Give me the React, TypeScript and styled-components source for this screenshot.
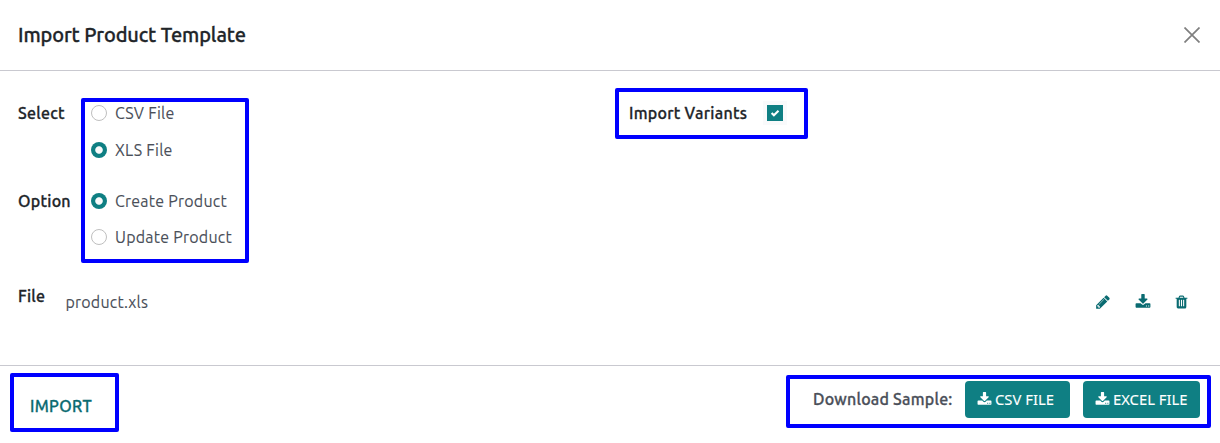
import React from "react";
import styled, { createGlobalStyle } from "styled-components";

const TEAL = "#0f7f83";

const GlobalStyle = createGlobalStyle`
  * { box-sizing: border-box; }
  body { margin: 0; background: #fff; }
`;

const Dialog = styled.div`
  width: 1220px;
  height: 443px;
  display: flex;
  flex-direction: column;
  overflow: hidden;
  background: #fff;
  color: #4a4f59;
  font-family: Ubuntu, "Noto Sans", sans-serif;
  font-size: 16px;
  line-height: 24px;
`;

const Header = styled.header`
  height: 71px;
  flex: none;
  display: flex;
  align-items: center;
  justify-content: space-between;
  padding: 0 20px 0 18px;
  border-bottom: 1px solid #c9c9d0;
`;

const Text = styled.span<{ $track?: number; $size?: number; $strong?: boolean }>`
  display: block;
  white-space: nowrap;
  font-size: ${(p) => p.$size ?? 16}px;
  letter-spacing: ${(p) => p.$track ?? 0}px;
  font-weight: ${(p) => (p.$strong ? 500 : 400)};
  -webkit-text-stroke: ${(p) => (p.$strong ? 0.3 : 0.1)}px currentColor;
`;

const Title = styled.h1`
  margin: 0;
  color: #212529;
`;

const CloseButton = styled.button`
  display: flex;
  padding: 0;
  border: 0;
  background: none;
`;

const Body = styled.main`
  height: 294px;
  flex: none;
  padding: 17px 0 0 18px;
`;

const Fields = styled.div`
  display: flex;
  height: 175px;
`;

const Labels = styled.div`
  width: 63px;
  padding-top: 13px;
  display: flex;
  flex-direction: column;
  gap: 64px;
  color: #212529;
`;

const Frame = styled.div<{ $w: number; $h: number }>`
  width: ${(p) => p.$w}px;
  height: ${(p) => p.$h}px;
  flex: none;
  border: 4px solid #0000ff;
  border-radius: 2px;
`;

const RadioFrame = styled(Frame)`
  margin-top: 10px;
  padding: 0 6px;
`;

const RadioGroup = styled.div`
  margin-top: -1px;
  & + & { margin-top: 27px; }
`;

const RadioRow = styled.div`
  height: 24px;
  display: flex;
  align-items: center;
  gap: 8px;
  & + & { margin-top: 12.5px; }
`;

const Radio = styled.span<{ $on?: boolean }>`
  width: 16px;
  height: 16px;
  flex: none;
  border-radius: 50%;
  background: ${(p) => (p.$on ? `radial-gradient(circle, #f9fafb 3.3px, ${TEAL} 4.2px)` : "#fff")};
  border: ${(p) => (p.$on ? "0" : "1px solid #bfbfbf")};
`;

const VariantsFrame = styled(Frame)`
  margin-left: 366px;
  padding: 0 0 2px 10px;
  display: flex;
  align-items: center;
  color: #212529;
`;

const VariantsLabel = styled.div`
  width: 134px;
`;

const CheckHalo = styled.span`
  width: 24px;
  height: 24px;
  padding: 4px;
  background: #f9fafb;
`;

const Checkbox = styled.span`
  display: block;
  width: 16px;
  height: 16px;
  background: ${TEAL};
  svg { display: block; }
`;

const FileRow = styled.div`
  display: flex;
  margin-top: 21px;
  padding-right: 31px;
`;

const FileLabel = styled.div`
  width: 47.5px;
  color: #212529;
`;

const FileName = styled.div`
  padding-top: 6px;
`;

const FileActions = styled.div`
  margin-left: auto;
  padding-top: 10px;
  display: flex;
  color: #0a6b71;
`;

const Action = styled.span<{ $w: number }>`
  width: ${(p) => p.$w}px;
  display: flex;
`;

const Footer = styled.footer`
  flex: 1;
  display: flex;
  align-items: flex-start;
  justify-content: space-between;
  padding: 7px 9px 0 10px;
  border-top: 1px solid #c9c9d0;
`;

const ImportFrame = styled(Frame)`
  padding: 17px 0 0 16px;
  color: #0a6b71;
`;

const SampleFrame = styled(Frame)`
  margin-top: 2px;
  padding: 2px 7px 0 23px;
  display: flex;
  align-items: flex-start;
`;

const SampleLabel = styled.div`
  width: 152px;
  padding-top: 6px;
`;

const Button = styled.button<{ $w: number }>`
  width: ${(p) => p.$w}px;
  height: 37px;
  flex: none;
  display: flex;
  align-items: center;
  gap: 3px;
  padding: 0 0 2px 12px;
  border: 0;
  border-radius: 4px;
  background: ${TEAL};
  color: #fff;
  font-family: "Noto Sans", sans-serif;
  svg { margin-top: 1px; }
  & + & { margin-left: 13px; }
`;

const PATHS = {
  pencil:
    "M491 1536l91-91-235-235-91 91v107h128v128h107zm523-928q0-22-22-22-10 0-17 7l-542 542q-7 7-7 17 0 22 22 22 10 0 17-7l542-542q7-7 7-17zm-54-192l416 416-832 832h-416v-416zm683 96q0 53-37 90l-166 166-416-416 166-165q36-38 90-38 53 0 91 38l235 234q37 39 37 91z",
  download:
    "M1344 1344q0-26-19-45t-45-19-45 19-19 45 19 45 45 19 45-19 19-45zm256 0q0-26-19-45t-45-19-45 19-19 45 19 45 45 19 45-19 19-45zm128-224v320q0 40-28 68t-68 28h-1472q-40 0-68-28t-28-68v-320q0-40 28-68t68-28h465l135 136q58 56 136 56t136-56l136-136h464q40 0 68 28t28 68zm-325-569q17 41-14 70l-448 448q-18 19-45 19t-45-19l-448-448q-31-29-14-70 17-39 59-39h256v-448q0-26 19-45t45-19h256q26 0 45 19t19 45v448h256q42 0 59 39z",
  trash:
    "M704 1376v-704q0-14-9-23t-23-9h-64q-14 0-23 9t-9 23v704q0 14 9 23t23 9h64q14 0 23-9t9-23zm256 0v-704q0-14-9-23t-23-9h-64q-14 0-23 9t-9 23v704q0 14 9 23t23 9h64q14 0 23-9t9-23zm256 0v-704q0-14-9-23t-23-9h-64q-14 0-23 9t-9 23v704q0 14 9 23t23 9h64q14 0 23-9t9-23zm-544-992h448l-48-117q-7-9-17-11h-317q-10 2-17 11zm928 32v64q0 14-9 23t-23 9h-96v948q0 83-47 143.5t-113 60.5h-832q-66 0-113-58.5t-47-141.5v-952h-96q-14 0-23-9t-9-23v-64q0-14 9-23t23-9h309l70-167q15-37 54-63t79-26h320q40 0 79 26t54 63l70 167h309q14 0 23 9t9 23z",
};

const Icon = ({ name, size = 16 }: { name: keyof typeof PATHS; size?: number }) => (
  <svg width={size} height={size} viewBox="0 0 1792 1792" fill="currentColor">
    <path d={PATHS[name]} />
  </svg>
);

const Option = ({ label, on, track }: { label: string; on?: boolean; track: number }) => (
  <RadioRow>
    <Radio $on={on} />
    <Text $track={track}>{label}</Text>
  </RadioRow>
);

export default function App() {
  return (
    <>
      <GlobalStyle />
      <Dialog>
        <Header>
          <Title>
            <Text $size={20} $strong $track={-0.14}>Import Product Template</Text>
          </Title>
          <CloseButton aria-label="Close">
            <svg width="16" height="16" viewBox="0 0 16 16" stroke="#7f7f7f" strokeWidth="1.7">
              <path d="M.5 .5l15 15M15.5 .5l-15 15" />
            </svg>
          </CloseButton>
        </Header>
        <Body>
          <Fields>
            <Labels>
              <Text $strong $track={0.25}>Select</Text>
              <Text $strong $track={0.25}>Option</Text>
            </Labels>
            <RadioFrame $w={168} $h={165}>
              <RadioGroup>
                <Option label="CSV File" track={0.26} />
                <Option label="XLS File" on track={0.26} />
              </RadioGroup>
              <RadioGroup>
                <Option label="Create Product" on track={0.22} />
                <Option label="Update Product" track={0.22} />
              </RadioGroup>
            </RadioFrame>
            <VariantsFrame $w={193} $h={51}>
              <VariantsLabel>
                <Text $strong $track={0.27}>Import Variants</Text>
              </VariantsLabel>
              <CheckHalo>
                <Checkbox>
                  <svg width="16" height="16" viewBox="0 0 16 16" fill="none" stroke="#fff" strokeWidth="2.1">
                    <path d="M4.6 8l2.3 2.3 4.6-4.5" />
                  </svg>
                </Checkbox>
              </CheckHalo>
            </VariantsFrame>
          </Fields>
          <FileRow>
            <FileLabel>
              <Text $strong $track={0.27}>File</Text>
            </FileLabel>
            <FileName>
              <Text $track={0.2}>product.xls</Text>
            </FileName>
            <FileActions>
              <Action $w={40}><Icon name="pencil" /></Action>
              <Action $w={39}><Icon name="download" /></Action>
              <Action $w={15}><Icon name="trash" /></Action>
            </FileActions>
          </FileRow>
        </Body>
        <Footer>
          <ImportFrame $w={109} $h={59}>
            <Text $strong $track={0.3}>IMPORT</Text>
          </ImportFrame>
          <SampleFrame $w={425} $h={53}>
            <SampleLabel>
              <Text $strong $track={0.22}>Download Sample:</Text>
            </SampleLabel>
            <Button $w={105}>
              <Icon name="download" size={15} />
              <Text $size={14.8} $track={0}>CSV FILE</Text>
            </Button>
            <Button $w={117}>
              <Icon name="download" size={15} />
              <Text $size={14.8} $track={0}>EXCEL FILE</Text>
            </Button>
          </SampleFrame>
        </Footer>
      </Dialog>
    </>
  );
}
